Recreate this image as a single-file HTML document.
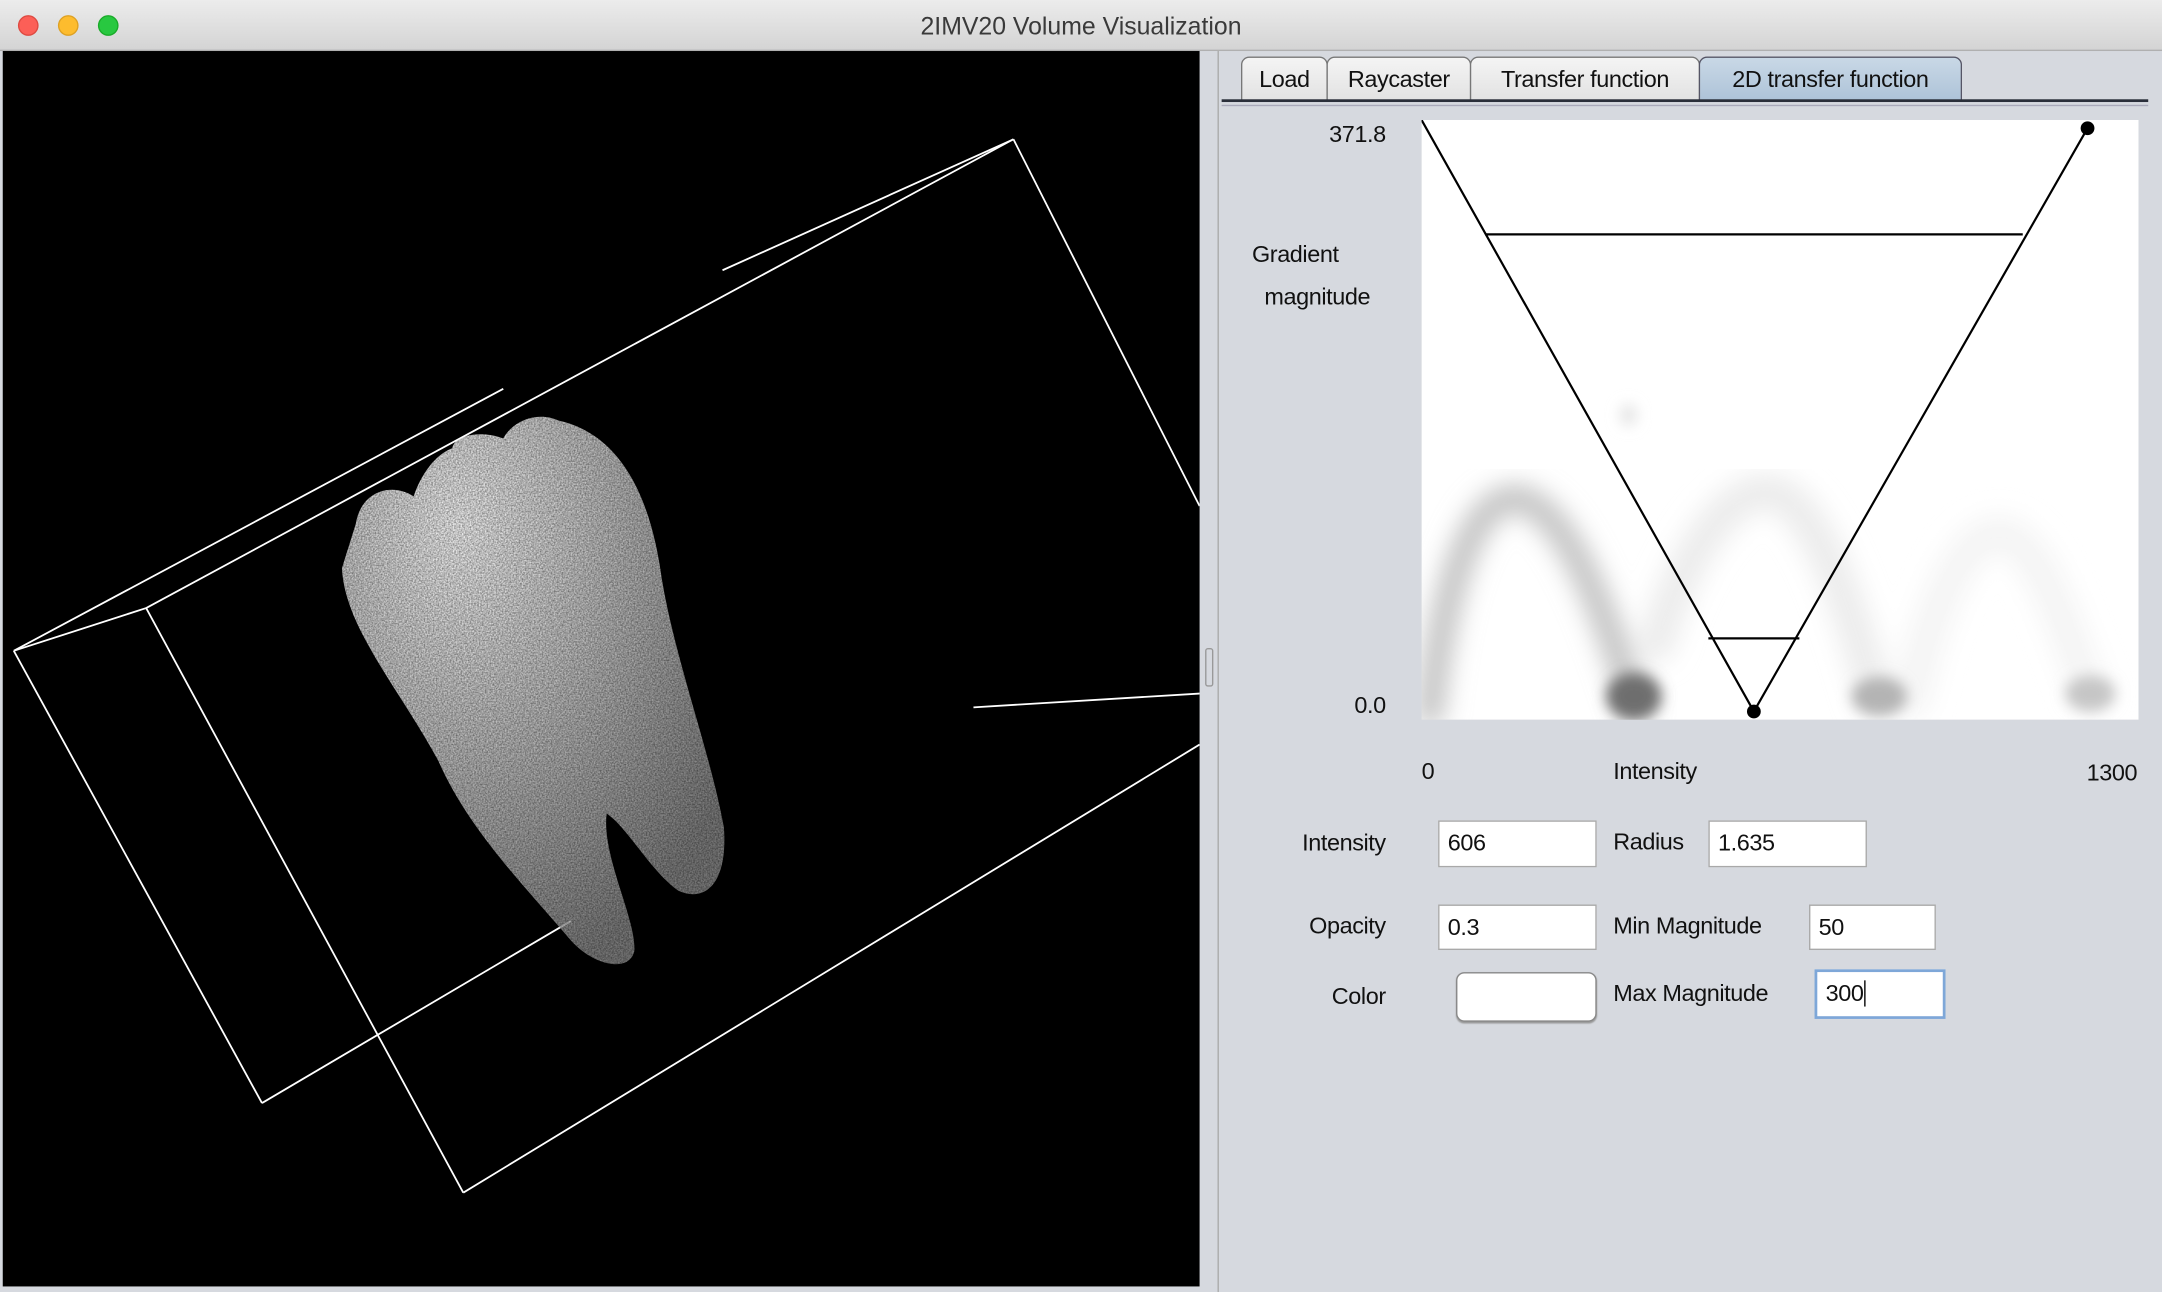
<!DOCTYPE html>
<html><head><meta charset="utf-8">
<style>
html,body{margin:0;padding:0;width:2162px;height:1292px;overflow:hidden;background:#d6d9df}
#w{position:absolute;left:0;top:0;width:1568px;height:937px;transform:scale(1.37883);transform-origin:0 0;background:#d6d9df;font-family:"Liberation Sans",sans-serif;font-size:17px;color:#111;letter-spacing:-0.3px}
.t{position:absolute;white-space:nowrap}
#title{position:absolute;left:0;top:0;width:1568px;height:36px;background:linear-gradient(#ececec,#d4d4d4);border-bottom:1px solid #b0b0b0;text-align:center;line-height:38px;font-size:18px;color:#3a3a3a;letter-spacing:0}
.dot{position:absolute;top:11px;width:13px;height:13px;border-radius:50%}
.tab{position:absolute;top:41px;height:31px;border:1px solid #777;border-bottom:none;border-radius:6px 6px 0 0;background:linear-gradient(#f4f4f4,#e2e2e2);line-height:32px;text-align:center;font-size:17px}
.f{position:absolute;background:#fff;border:1px solid #a9a9a9;box-sizing:border-box;padding-left:6px;line-height:31px;font-size:17px}
</style></head><body><div id="w">
<div id="title">2IMV20 Volume Visualization
<div class="dot" style="left:13px;background:#fc5f57;border:0.5px solid #de4a41"></div>
<div class="dot" style="left:42px;background:#fdbc2e;border:0.5px solid #dea123"></div>
<div class="dot" style="left:71px;background:#28c840;border:0.5px solid #1aab29"></div>
</div>
<div style="position:absolute;left:2px;top:37px;width:868px;height:896px;background:#000"></div>
<div style="position:absolute;left:874px;top:470px;width:4px;height:26px;border:1px solid #999;border-radius:2px"></div>
<div style="position:absolute;left:883px;top:37px;width:1px;height:900px;background:#aaa"></div>
<svg style="position:absolute;left:0;top:0" width="870" height="937">
<defs>
<filter id="n" x="0" y="0" width="100%" height="100%"><feTurbulence type="fractalNoise" baseFrequency="0.9" numOctaves="2" result="t"/><feColorMatrix in="t" type="matrix" values="0 0 0 0 0  0 0 0 0 0  0 0 0 0 0  0 0 0 -0.8 1.2" result="m"/><feComposite in="SourceGraphic" in2="m" operator="in"/></filter>
<radialGradient id="g" cx="0.3" cy="0.2" r="0.85"><stop offset="0" stop-color="#f2f2f2"/><stop offset="0.45" stop-color="#bdbdbd"/><stop offset="1" stop-color="#7a7a7a"/></radialGradient>
</defs>
<g stroke="#fff" stroke-width="1.3" fill="none">
<line x1="524" y1="196" x2="735" y2="101"/><line x1="735" y1="101" x2="870" y2="367"/>
<line x1="735" y1="101" x2="106" y2="441"/><line x1="365" y1="282" x2="10" y2="472"/>
<line x1="10" y1="472" x2="106" y2="441"/><line x1="10" y1="472" x2="190" y2="800"/>
<line x1="106" y1="441" x2="336" y2="865"/><line x1="190" y1="800" x2="414" y2="668"/>
<line x1="336" y1="865" x2="870" y2="540"/><line x1="706" y1="513" x2="870" y2="503"/>
</g>
<path filter="url(#n)" fill="url(#g)" d="M258,380 C262,355 285,350 300,360 C305,345 315,330 328,325 C330,315 350,312 365,318 C372,305 390,298 405,305 C450,315 472,360 480,420 C490,480 515,545 525,600 C528,640 512,655 492,646 C472,632 455,600 440,590 C436,620 462,668 460,690 C456,706 430,700 414,682 C380,642 340,602 318,552 C290,500 250,455 248,412 Z"/>
</svg>
<div class="tab" style="left:900px;width:61px">Load</div>
<div class="tab" style="left:962px;width:103px">Raycaster</div>
<div class="tab" style="left:1066px;width:165px">Transfer function</div>
<div class="tab" style="left:1232px;width:189px;background:linear-gradient(#c9d8e6,#adc3d8);border-color:#556">2D transfer function</div>
<div style="position:absolute;left:886px;top:72px;width:672px;height:2px;background:#2a2f3a"></div>
<div style="position:absolute;left:886px;top:76px;width:672px;height:1px;background:#aab"></div>
<svg style="position:absolute;left:1031px;top:87px" width="520" height="435">
<defs><filter id="b"><feGaussianBlur stdDeviation="9"/></filter><filter id="b2"><feGaussianBlur stdDeviation="5"/></filter></defs>
<rect width="520" height="435" fill="#fff"/>
<g filter="url(#b)" fill="none" stroke-linecap="round">
<path d="M6,430 C20,300 50,270 72,275 C110,285 140,380 155,425" stroke="#c2c2c2" stroke-width="20"/>
<path d="M170,380 C195,300 230,265 255,270 C290,280 315,370 330,420" stroke="#ececec" stroke-width="26"/>
<path d="M355,420 C375,330 400,300 420,300 C450,305 470,380 485,415" stroke="#f4f4f4" stroke-width="26"/>
</g>
<g filter="url(#b2)">
<ellipse cx="154" cy="418" rx="20" ry="17" fill="#6e6e6e"/>
<ellipse cx="332" cy="418" rx="20" ry="14" fill="#b4b4b4"/>
<ellipse cx="485" cy="416" rx="18" ry="13" fill="#c6c6c6"/>
<ellipse cx="150" cy="214" rx="6" ry="8" fill="#e4e4e4"/>
</g>
<g stroke="#000" stroke-width="1.6" fill="none">
<polyline points="0,0 241,429 483,6"/>
<line x1="46" y1="83" x2="436" y2="83"/>
<line x1="208" y1="376" x2="274" y2="376"/>
</g>
<circle cx="483" cy="6" r="5" fill="#000"/><circle cx="241" cy="429" r="5" fill="#000"/>
</svg>
<div class="t" style="right:563px;top:88px">371.8</div>
<div class="t" style="left:908px;top:175px">Gradient</div>
<div class="t" style="left:917px;top:206px">magnitude</div>
<div class="t" style="right:563px;top:502px">0.0</div>
<div class="t" style="left:1031px;top:550px">0</div>
<div class="t" style="left:1170px;top:550px">Intensity</div>
<div class="t" style="right:18px;top:551px">1300</div>
<div class="t" style="right:563px;top:602px">Intensity</div>
<div class="f" style="left:1043px;top:595px;width:115px;height:34px">606</div>
<div class="t" style="left:1170px;top:601px">Radius</div>
<div class="f" style="left:1239px;top:595px;width:115px;height:34px">1.635</div>
<div class="t" style="right:563px;top:662px">Opacity</div>
<div class="f" style="left:1043px;top:656px;width:115px;height:33px">0.3</div>
<div class="t" style="left:1170px;top:662px">Min Magnitude</div>
<div class="f" style="left:1312px;top:656px;width:92px;height:33px">50</div>
<div class="t" style="right:563px;top:713px">Color</div>
<div style="position:absolute;left:1056px;top:705px;width:102px;height:36px;box-sizing:border-box;background:#fff;border:1px solid #888;border-radius:6px;box-shadow:0 1px 1px #999"></div>
<div class="t" style="left:1170px;top:711px">Max Magnitude</div>
<div class="f" style="left:1316px;top:703px;width:95px;height:36px;border:2px solid #7ea7d8;line-height:32px;padding-left:6px">300<span style="border-left:1px solid #000;margin-left:1px"></span></div>
</div></body></html>
